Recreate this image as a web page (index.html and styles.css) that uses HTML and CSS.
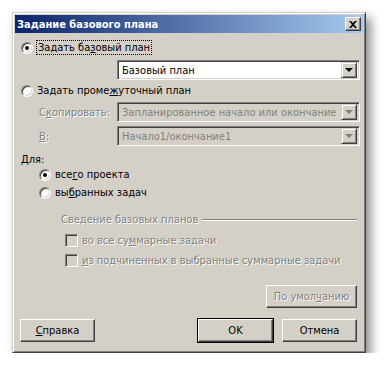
FILE: index.html
```html
<!DOCTYPE html>
<html lang="ru">
<head>
  <meta charset="UTF-8" />
  <title>Задание базового плана</title>
  <link rel="stylesheet" href="styles.css">
</head>
<body>

<div class="window">
  <!-- Title bar -->
  <div class="titlebar">
    <span class="title">Задание базового плана</span>
    <button class="close-btn">
      <svg width="8" height="7" viewBox="0 0 8 7"><path d="M0 0h2l2 2 2-2h2L5 3.5 8 7H6L4 5 2 7H0l3-3.5z" fill="#000"/></svg>
    </button>
  </div>

  <div class="client">
    <div class="row r1">
      <span class="radio checked"></span>
      <span class="label focus">Задать ба<u>з</u>овый план</span>
    </div>

    <div class="combo-row c1">
      <div></div>
      <div class="combo">
        <span class="combo-text">Базовый план</span>
        <span class="arrow"></span>
      </div>
    </div>

    <div class="row r2">
      <span class="radio"></span>
      <span class="label">Задать проме<u>ж</u>уточный план</span>
    </div>

    <div class="combo-row c2">
      <span class="label disabled indent">С<u>к</u>опировать:</span>
      <div class="combo off">
        <span class="combo-text">Запланированное начало или окончание</span>
        <span class="arrow"></span>
      </div>
    </div>

    <div class="combo-row c3">
      <span class="label disabled indent"><u>В</u>:</span>
      <div class="combo off">
        <span class="combo-text">Начало1/окончание1</span>
        <span class="arrow"></span>
      </div>
    </div>

    <div class="row r-for">
      <span class="label">Для:</span>
    </div>

    <div class="row sub r-all">
      <span class="radio checked"></span>
      <span class="label">все<u>г</u>о проекта</span>
    </div>
    <div class="row sub r-sel">
      <span class="radio"></span>
      <span class="label">вы<u>б</u>ранных задач</span>
    </div>

    <!-- Rollup group -->
    <div class="group">
      <span class="label disabled">Сведение базовых планов</span>
      <span class="group-line"></span>
    </div>
    <div class="row check-row k1">
      <span class="checkbox"></span>
      <span class="label disabled">во все су<u>м</u>марные задачи</span>
    </div>
    <div class="row check-row k2">
      <span class="checkbox"></span>
      <span class="label disabled"><u>и</u>з подчиненных в выбранные суммарные задачи</span>
    </div>

    <div class="default-row">
      <button class="btn disabled-btn">По умол<u>ч</u>анию</button>
    </div>

    <div class="buttons">
      <button class="btn"><u>С</u>правка</button>
      <span class="spacer"></span>
      <button class="btn default">OK</button>
      <button class="btn">Отмена</button>
    </div>
  </div>
</div>

</body>
</html>
```

FILE: styles.css
```css
* { margin: 0; padding: 0; box-sizing: border-box; }

body {
  background: #fff;
  font-family: "DejaVu Sans Condensed", "DejaVu Sans", sans-serif;
  font-size: 11px;
  color: #000;
}

.window {
  margin: 12px 0 0 12px;
  width: 354px;
  height: 341px;
  background: #d4d0c8;
  border: 1px solid;
  border-color: #d4d0c8 #404040 #404040 #d4d0c8;
  box-shadow: inset 1px 1px #fff, inset -1px -1px #808080, 5px 6px 10px rgba(0,0,0,0.45);
  padding: 2px;
}

.titlebar {
  height: 18px;
  background: linear-gradient(to right, #0a246a, #a6caf0);
  display: flex;
  align-items: center;
  justify-content: space-between;
  padding: 0 2px 0 2px;
}

.title {
  color: #fff;
  font-weight: bold;
  font-size: 11px;
}

.close-btn {
  width: 16px;
  height: 14px;
  background: #d4d0c8;
  border: 1px solid;
  border-color: #fff #404040 #404040 #fff;
  box-shadow: inset -1px -1px #808080;
  display: flex;
  align-items: center;
  justify-content: center;
}

.client {
  padding: 0 3px 0 3px;
}

.row {
  display: flex;
  align-items: center;
  height: 15px;
  padding-left: 3px;
}

.r1 { margin-top: 7px; }
.r2 { margin-top: 3px; }
.r-for { margin-top: 6px; }
.r-all { margin-top: 0; }
.r-sel { margin-top: 3px; }
.sub { padding-left: 21px; }

.label { white-space: nowrap; }
.label u { text-decoration: underline; }

.row .radio + .label,
.row .checkbox + .label { margin-left: 4px; }

.focus {
  outline: 1px dotted #000;
  padding: 0 1px;
}

.disabled {
  color: #808080;
  text-shadow: 1px 1px #fff;
}

.radio {
  width: 12px;
  height: 12px;
  border-radius: 50%;
  background: #fff;
  border: 1px solid;
  border-color: #808080 #fff #fff #808080;
  box-shadow: inset 1px 1px #404040, inset -1px -1px #d4d0c8;
  position: relative;
  flex: none;
}

.radio.checked::after {
  content: "";
  position: absolute;
  left: 3px;
  top: 3px;
  width: 4px;
  height: 4px;
  border-radius: 50%;
  background: #000;
}

.checkbox {
  width: 13px;
  height: 13px;
  background: #d4d0c8;
  border: 1px solid;
  border-color: #808080 #fff #fff #808080;
  box-shadow: inset 1px 1px #404040, inset -1px -1px #d4d0c8;
  flex: none;
}

.check-row { padding-left: 47px; }
.k1 { margin-top: 6px; }
.k2 { margin-top: 5px; }

/* Combo boxes */
.combo-row {
  display: grid;
  grid-template-columns: 99px 1fr;
  align-items: center;
  height: 20px;
}

.c1 { margin-top: 5px; }
.c2 { margin-top: 4px; }
.c3 { margin-top: 4px; }

.indent { padding-left: 21px; }

.combo {
  height: 20px;
  background: #fff;
  border: 1px solid;
  border-color: #808080 #fff #fff #808080;
  box-shadow: inset 1px 1px #404040, inset -1px -1px #d4d0c8;
  display: flex;
  align-items: center;
  justify-content: space-between;
  padding: 2px 2px 2px 4px;
}

.combo.off {
  background: #d4d0c8;
  color: #808080;
}

.combo-text { white-space: nowrap; overflow: hidden; }

.arrow {
  width: 16px;
  height: 16px;
  flex: none;
  background: #d4d0c8;
  border: 1px solid;
  border-color: #d4d0c8 #404040 #404040 #d4d0c8;
  box-shadow: inset 1px 1px #fff, inset -1px -1px #808080;
  position: relative;
}

.arrow::after {
  content: "";
  position: absolute;
  left: 3px;
  top: 5px;
  border-left: 4px solid transparent;
  border-right: 4px solid transparent;
  border-top: 4px solid #000;
}

.combo.off .arrow::after {
  border-top-color: #808080;
}

/* Group header */
.group {
  display: flex;
  align-items: center;
  height: 15px;
  margin-top: 12px;
  padding-left: 43px;
  padding-right: 3px;
}

.group-line {
  flex: 1;
  margin-left: 4px;
  border-top: 1px solid #808080;
  border-bottom: 1px solid #fff;
}

/* Buttons */
.btn {
  font-family: inherit;
  font-size: 11px;
  height: 23px;
  width: 75px;
  background: #d4d0c8;
  color: #000;
  border: 1px solid;
  border-color: #fff #404040 #404040 #fff;
  box-shadow: inset -1px -1px #808080;
}

.default-row {
  display: flex;
  justify-content: flex-end;
  margin-top: 17px;
  padding-right: 3px;
}

.disabled-btn {
  width: 91px;
  color: #808080;
  text-shadow: 1px 1px #fff;
}

.buttons {
  display: flex;
  gap: 9px;
  margin-top: 11px;
  padding: 0 3px 0 2px;
}

.spacer { flex: 1; }

.btn.default {
  outline: 1px solid #000;
  outline-offset: 0;
  border-color: #fff #404040 #404040 #fff;
}
```
